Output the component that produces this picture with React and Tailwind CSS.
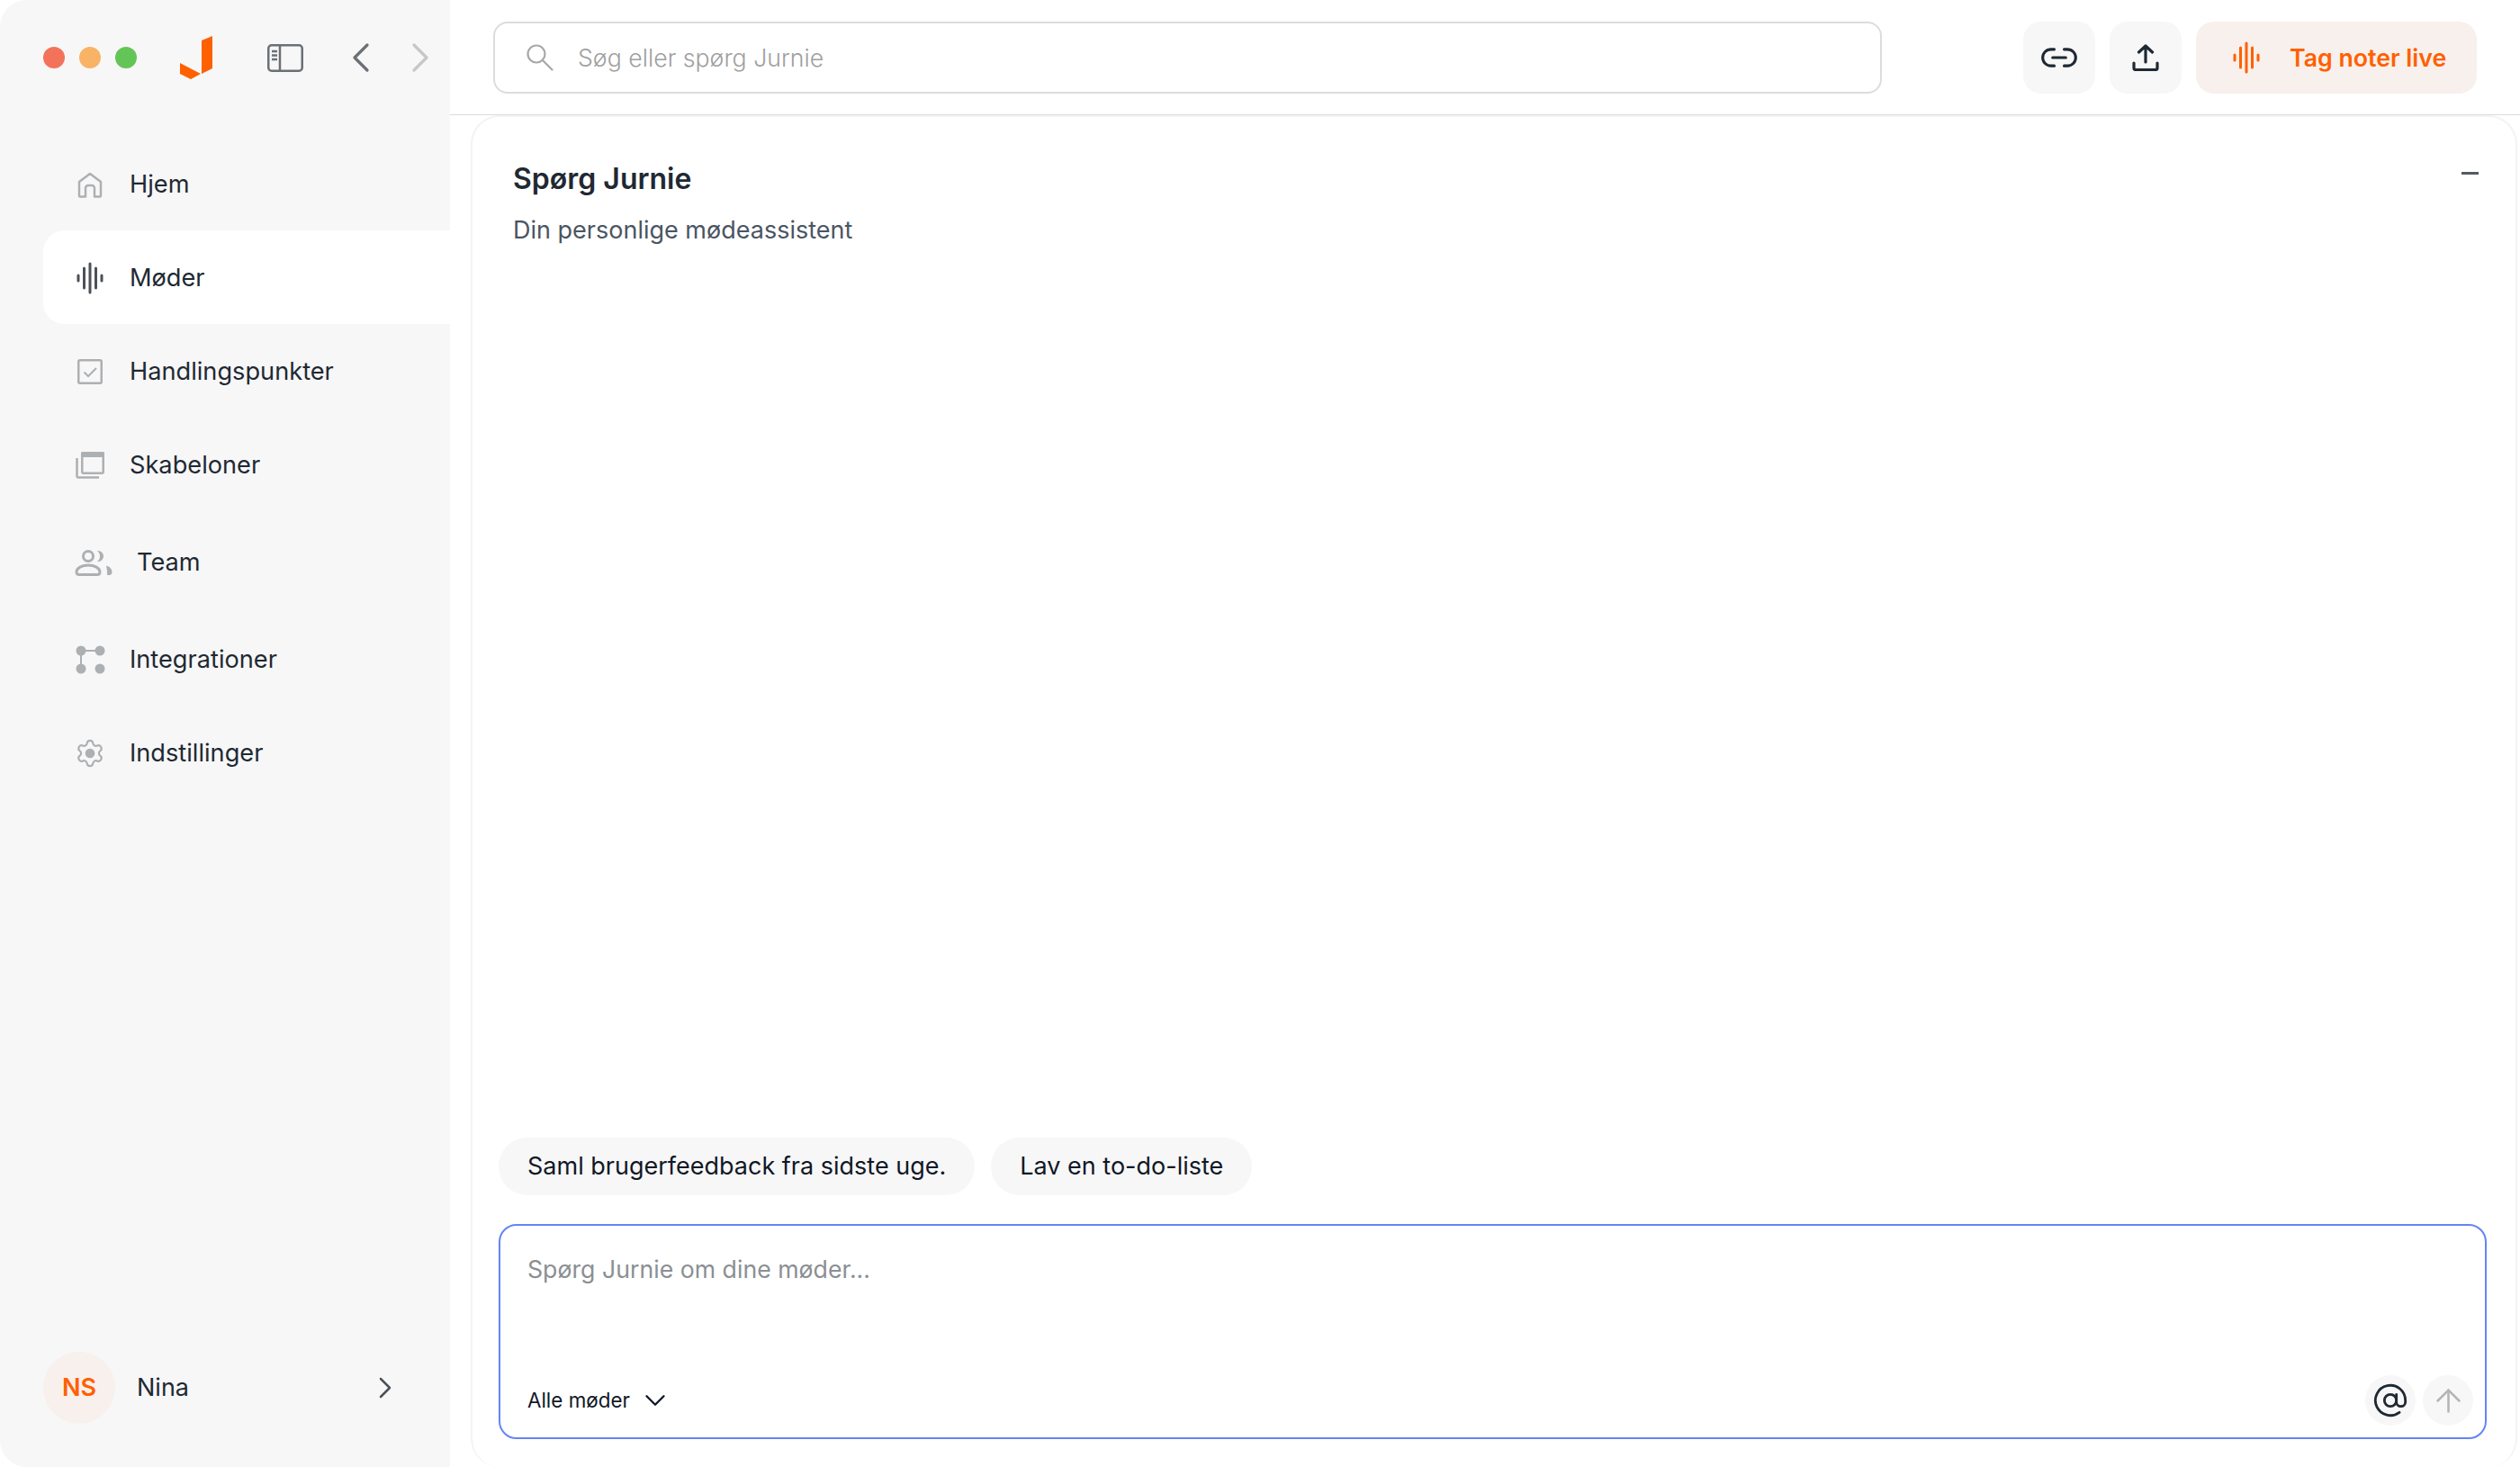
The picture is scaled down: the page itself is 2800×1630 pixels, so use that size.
import React from "react";
import { Link2, AtSign, ArrowUp, Settings, ChevronDown, ChevronRight, ChevronLeft } from "lucide-react";

const Wave = ({ className }) => (
  <svg width="30" height="36" viewBox="0 0 30 36" fill="none" stroke="currentColor" strokeWidth="3" strokeLinecap="round" className={className}>
    <path d="M2 15v6M8.500 7v22M15 2v32M21.500 7v22M28 15v6" />
  </svg>
);

const HomeIcon = () => (
  <svg width="28" height="29" viewBox="0 0 28 29" fill="none" stroke="#adb0b3" strokeWidth="2.500" strokeLinejoin="round">
    <path d="M2 11 14 2l12 9v15.500a1 1 0 0 1-1 1h-6V18a3 3 0 0 0-3-3h-4a3 3 0 0 0-3 3v9.500H3a1 1 0 0 1-1-1z" />
  </svg>
);

const CheckIcon = () => (
  <svg width="28" height="28" viewBox="0 0 28 28" fill="none" stroke="#adb0b3">
    <rect x="1.250" y="1.250" width="25.500" height="25.500" rx="1.500" strokeWidth="2.500" />
    <path d="m7.500 14.500 4.500 4.500 9-9" strokeWidth="2" />
  </svg>
);

const TemplateIcon = () => (
  <svg width="32" height="30" viewBox="0 0 32 30" fill="none" stroke="#adb0b3" strokeWidth="2.500">
    <path d="M1.500 7v20a1.500 1.500 0 0 0 1.500 1.500h23" />
    <rect x="7.250" y="1.250" width="23.500" height="22.500" rx="1.500" />
    <path d="M6 1.500a1.500 1.500 0 0 1 1.500-1.500h23a1.500 1.500 0 0 1 1.500 1.500V6H6z" fill="#adb0b3" stroke="none" />
  </svg>
);

const TeamIcon = () => (
  <svg width="42" height="29" viewBox="0 0 42 29" fill="none">
    <circle cx="15" cy="7" r="5.500" stroke="#adb0b3" strokeWidth="3" />
    <path d="M2 24.500C2 20 8 17 15 17s13 3 13 7.500c0 2-1 3-3 3H5c-2 0-3-1-3-3z" stroke="#adb0b3" strokeWidth="3" />
    <path d="M25 1c4-.500 7 2.500 7 6s-3 6.500-7 6c2-1.500 3-3.500 3-6s-1-4.500-3-6zM35 17.500c4 1 6.500 4 6.500 7 0 2-1 3.500-3 3.500H36c.5-4-.5-7.500-1-10.500z" fill="#adb0b3" />
  </svg>
);

const IntegrationIcon = () => (
  <svg width="33" height="32" viewBox="0 0 33 32" fill="#adb0b3">
    <path d="M6 6h21M6 6v20" stroke="#adb0b3" strokeWidth="2" />
    <circle cx="6" cy="6" r="5.500" />
    <circle cx="27" cy="6" r="5.500" />
    <circle cx="6" cy="26" r="5.500" />
    <circle cx="27" cy="26" r="5.500" />
  </svg>
);

const NAV = [
  { label: "Hjem", icon: <HomeIcon /> },
  { label: "Møder", icon: <Wave className="text-[#4b5158]" />, active: true },
  { label: "Handlingspunkter", icon: <CheckIcon /> },
  { label: "Skabeloner", icon: <TemplateIcon /> },
  { label: "Team", icon: <TeamIcon />, wide: true },
  { label: "Integrationer", icon: <IntegrationIcon /> },
  { label: "Indstillinger", icon: <Settings size={40} strokeWidth={1.500} color="#adb0b3" className="[&_circle]:fill-[#adb0b3]" /> },
];

const Sidebar = () => (
  <aside className="w-[500px] shrink-0 bg-[#f7f7f7] flex flex-col">
    <div className="h-[128px] shrink-0 pl-[48px] flex items-center">
      <div className="flex gap-[16px]">
        <span className="w-[24px] h-[24px] rounded-full bg-[#f3735a]" />
        <span className="w-[24px] h-[24px] rounded-full bg-[#f9b366]" />
        <span className="w-[24px] h-[24px] rounded-full bg-[#64c557]" />
      </div>
      {/* logo */}
      <svg width="36" height="48" viewBox="0 0 36 48" fill="#ff6000" className="ml-[48px]">
        <path d="M24 5 36 0v36l-12 6z" />
        <path d="M0 30l23 12-11 6-12-6z" />
      </svg>
      <svg width="40" height="31" viewBox="0 0 40 31" fill="none" stroke="#6b7075" strokeWidth="2.500" className="ml-[61px]">
        <rect x="1.250" y="1.250" width="37.500" height="28.500" rx="3.500" />
        <path d="M14 1v29M5 8h6M5 12.500h6M5 17h6" />
      </svg>
      <ChevronLeft size={56} strokeWidth={1.400} color="#6b7075" className="ml-[36px]" />
      <ChevronRight size={56} strokeWidth={1.400} color="#c6c7c8" className="ml-[10px]" />
    </div>

    <nav className="pl-[48px] pt-[24px] flex flex-col">
      {NAV.map((item) => (
        <div
          key={item.label}
          className={`${item.wide ? "h-[112px]" : "h-[104px]"} pl-[35px] pt-[2px] flex items-center gap-[27px] rounded-l-[24px] ${item.active ? "bg-white" : ""}`}
        >
          <span className={`${item.wide ? "w-[42px]" : "w-[34px]"} flex justify-center`}>{item.icon}</span>
          <span className="text-[27.2px] text-[#1f2933]">{item.label}</span>
        </div>
      ))}
    </nav>

    <div className="mt-auto pl-[48px] pr-[52px] pb-[48px] flex items-center">
      <div className="w-[80px] h-[80px] rounded-full bg-[#f8f0ec] flex items-center justify-center text-[27px] font-semibold text-[#ff6000]">
        NS
      </div>
      <span className="flex-1 ml-[24px] text-[27px] text-[#1f2933]">Nina</span>
      <ChevronRight size={40} strokeWidth={1.500} color="#4b5158" />
    </div>
  </aside>
);

const TopBar = () => (
  <header className="h-[128px] shrink-0 border-b border-[#dedbd9] pl-[48px] pr-[48px] pt-[1px] flex items-center">
    <div className="w-[1543px] h-[80px] rounded-[16px] border-2 border-[#dcdcdc] pl-[35px] flex items-center gap-[27px]">
      <svg width="30" height="30" viewBox="0 0 30 30" fill="none" stroke="#a8a8a8" strokeWidth="2.200" strokeLinecap="round">
        <circle cx="11" cy="11" r="9.500" />
        <path d="m18 18 10.500 10.500" />
      </svg>
      <span className="text-[26.7px] font-light text-[#a0a0a0]">Søg eller spørg Jurnie</span>
    </div>
    <button className="ml-[157px] w-[80px] h-[80px] rounded-[20px] bg-[#f7f7f7] flex items-center justify-center text-[#1f2933]">
      <Link2 size={44} strokeWidth={1.700} />
    </button>
    <button className="ml-[16px] w-[80px] h-[80px] rounded-[20px] bg-[#f7f7f7] flex items-center justify-center">
      <svg width="30" height="30" viewBox="0 0 30 30" fill="none" stroke="#1f2933" strokeWidth="3.200" strokeLinecap="round" strokeLinejoin="round">
        <path d="M15 20V2M7.500 9 15 2l7.500 7M2 21v5.500a2 2 0 0 0 2 2h22a2 2 0 0 0 2-2V21" />
      </svg>
    </button>
    <button className="ml-[16px] w-[312px] h-[80px] rounded-[20px] bg-[#f8f0ec] pl-[41px] flex items-center gap-[33px] text-[#ff6000]">
      <Wave />
      <span className="text-[26.7px] font-semibold">Tag noter live</span>
    </button>
  </header>
);

const Chip = ({ children }) => (
  <span className="h-[64px] px-[32px] rounded-full bg-[#f7f7f7] flex items-center text-[27px] text-[#111827]">{children}</span>
);

const AskPanel = () => (
  <section className="flex-1 ml-[23px] mr-[3px] border-2 border-b-0 border-[#f3f3f3] rounded-t-[32px] rounded-b-[32px] flex flex-col pl-[29px] pr-[32px] pb-[31px] min-h-0">
    <div className="flex justify-between pt-[47px] pl-[16px]">
      <div>
        <h1 className="text-[32px] leading-[44px] font-semibold text-[#1f2933]">Spørg Jurnie</h1>
        <p className="mt-[16px] text-[27px] leading-[38px] text-[#4b5563]">Din personlige mødeassistent</p>
      </div>
      <span className="mr-[9px] mt-[14px] w-[19px] h-[3px] bg-[#555b62]" />
    </div>

    <div className="mt-auto flex gap-[18px]">
      <Chip>Saml brugerfeedback fra sidste uge.</Chip>
      <Chip>Lav en to-do-liste</Chip>
    </div>

    <div className="mt-[32px] h-[239px] rounded-[20px] border-2 border-[#6585f5] pl-[30px] pr-[13px] pt-[29px] pb-[13px] flex flex-col justify-between">
      <span className="text-[26.7px] leading-[38px] text-[#8b8f94]">Spørg Jurnie om dine møder...</span>
      <div className="flex items-center justify-between">
        <div className="flex items-center gap-[9px] text-[22.4px] text-[#111827]">
          Alle møder
          <ChevronDown size={38} strokeWidth={1.500} />
        </div>
        <div className="flex gap-[8px]">
          <span className="w-[56px] h-[56px] rounded-full bg-[#f7f7f7] flex items-center justify-center text-[#1f2933]">
            <AtSign size={40} strokeWidth={1.700} />
          </span>
          <span className="w-[56px] h-[56px] rounded-full bg-[#f7f7f7] flex items-center justify-center text-[#b5b5b5]">
            <ArrowUp size={41} strokeWidth={1.500} />
          </span>
        </div>
      </div>
    </div>
  </section>
);

export default function App() {
  return (
    <div className="w-[2800px] h-[1630px] rounded-[30px] overflow-hidden bg-white flex font-['Inter',sans-serif]">
      <Sidebar />
      <main className="flex-1 min-w-0 flex flex-col">
        <TopBar />
        <AskPanel />
      </main>
    </div>
  );
}
